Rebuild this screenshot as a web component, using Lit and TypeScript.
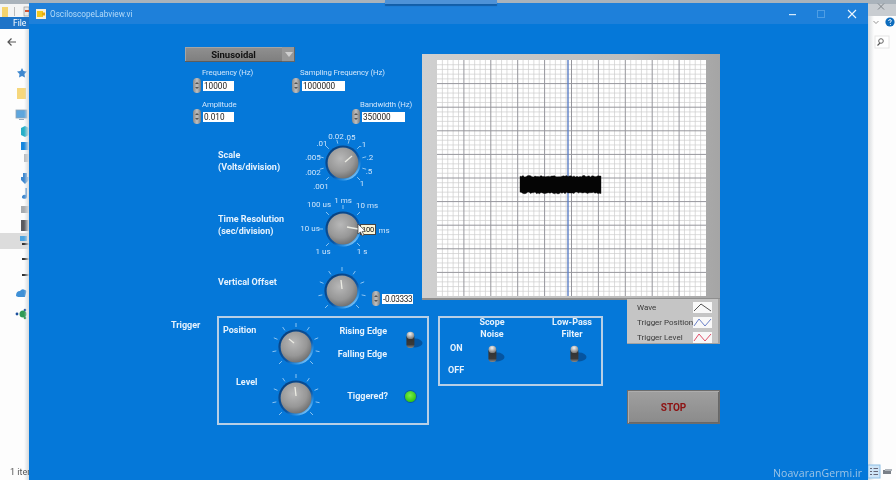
import { LitElement, html, css, svg } from "lit";
import { customElement, property } from "lit/decorators.js";

const pos = (x: number, y: number) => `left:${x - 29}px;top:${y - 24}px`;

@customElement("lv-knob")
class LvKnob extends LitElement {
  @property({ type: Number }) ticks = 9;
  @property({ type: Array }) pointer: number[] = [0, -2, 0, -10];
  static styles = css`
    :host { display: block; width: 60px; height: 60px; }
    svg { display: block; }
  `;
  render() {
    const t = [];
    for (let i = 0; i < this.ticks; i++) {
      const a = ((-135 + (270 * i) / (this.ticks - 1)) * Math.PI) / 180;
      t.push(svg`<line x1=${30 + 20 * Math.sin(a)} y1=${30 - 20 * Math.cos(a)} x2=${30 + 24 * Math.sin(a)} y2=${30 - 24 * Math.cos(a)} stroke="#8cc4f2" stroke-width="1" />`);
    }
    const p = this.pointer;
    return html`<svg width="60" height="60" viewBox="0 0 60 60">
      <defs>
        <radialGradient id="k" cx="0.42" cy="0.36" r="0.72">
          <stop offset="0" stop-color="#b8b8b8" />
          <stop offset="0.6" stop-color="#979797" />
          <stop offset="1" stop-color="#666" />
        </radialGradient>
        <linearGradient id="ring" x1="0.15" y1="0.1" x2="0.85" y2="0.95">
          <stop offset="0" stop-color="#08417f" />
          <stop offset="0.6" stop-color="#0a56a6" />
          <stop offset="0.82" stop-color="#2c93e6" />
          <stop offset="1" stop-color="#a6dafc" />
        </linearGradient>
      </defs>
      ${t}
      <circle cx="30" cy="30" r="17.6" fill="url(#ring)" />
      <circle cx="30" cy="30" r="15.4" fill="url(#k)" />
      <line x1=${30 + p[0]} y1=${30 + p[1]} x2=${30 + p[2]} y2=${30 + p[3]} stroke="#ecece4" stroke-width="1.3" />
    </svg>`;
  }
}

@customElement("lv-num")
class LvNum extends LitElement {
  @property() value = "";
  @property({ type: Number }) w = 30;
  static styles = css`
    :host { display: flex; align-items: center; gap: 2px; font: 8.2px Roboto, sans-serif; }
    .spin { width: 8px; height: 15px; border-radius: 4px; background: linear-gradient(90deg, #8a8a8a, #c0c0c0 50%, #7b7b7b); display: flex; flex-direction: column; align-items: center; justify-content: center; gap: 3px; }
    .spin i { width: 0; height: 0; border-left: 2px solid transparent; border-right: 2px solid transparent; }
    .spin i.u { border-bottom: 2px solid #555; }
    .spin i.d { border-top: 2px solid #555; }
    .box { height: 10px; background: #fff; color: #222; line-height: 10px; padding-left: 1px; overflow: hidden; white-space: nowrap; }
  `;
  render() {
    return html`<div class="spin"><i class="u"></i><i class="d"></i></div>
      <div class="box" style="width:${this.w - 1}px">${this.value}</div>`;
  }
}

@customElement("lv-toggle")
class LvToggle extends LitElement {
  static styles = css`:host { display: block; width: 20px; height: 20px; } svg { display: block; }`;
  render() {
    return html`<svg width="20" height="20" viewBox="0 0 20 20">
      <defs>
        <radialGradient id="tb" cx="0.45" cy="0.3" r="0.7"><stop offset="0" stop-color="#f4f4f4" /><stop offset="1" stop-color="#747474" /></radialGradient>
        <linearGradient id="tg" x1="0" y1="0" x2="0" y2="1"><stop offset="0" stop-color="#2e2e2e" /><stop offset="0.75" stop-color="#3a3a3a" /><stop offset="1" stop-color="#8a8a8a" /></linearGradient>
      </defs>
      <ellipse cx="12" cy="13" rx="7.5" ry="4.4" fill="#06488c" opacity="0.75" />
      <rect x="3.4" y="4" width="8" height="14" rx="3.4" fill="url(#tg)" />
      <ellipse cx="7.4" cy="5.4" rx="3.8" ry="3.6" fill="url(#tb)" />
    </svg>`;
  }
}

function wave() {
  let d = "M520 177";
  let s = 7;
  const r = () => ((s = (s * 73 + 41) % 101), s / 101);
  for (let x = 520; x <= 601; x += 1.5) d += ` L${x} ${177 - r() * 1.6}`;
  for (let x = 601; x >= 520; x -= 1.5) d += ` L${x} ${192 + r() * 1.8}`;
  return d + " Z";
}

@customElement("app-root")
class AppRoot extends LitElement {
  static styles = css`
    :host { display: block; width: 896px; height: 480px; overflow: hidden; font-family: Roboto, "Liberation Sans", Arial, sans-serif; }
    .stage { position: relative; width: 896px; height: 480px; background: #fdfdfd; overflow: hidden; filter: blur(0.45px); }
    .abs { position: absolute; }
    .topstrip { left: 0; top: 0; width: 896px; height: 4px; background: #aab3bb; }
    .chip { left: 385px; top: 0; width: 112px; height: 4px; background: #4d92d8; box-shadow: 0 2px 1px #125ea8; z-index: 3; }
    .qa { left: 0; top: 4px; width: 29px; height: 13px; background: #f4f4f4; }
    .filetab { left: 0; top: 17px; width: 29px; height: 12px; background: #1f74c8; color: #fff; font-size: 8.5px; line-height: 12px; padding-left: 13px; box-sizing: border-box; }
    .selrow { left: 0; top: 233px; width: 29px; height: 16px; background: #dcdcdc; }
    .shadow-l { left: 24px; top: 29px; width: 5px; height: 451px; background: linear-gradient(90deg, transparent, #d6dadd); }
    .items { left: 10px; top: 467px; font-size: 9px; color: #555; white-space: nowrap; }
    .rtop { left: 868px; top: 4px; width: 28px; height: 12px; background: #c9cdd1; }
    .rshadow { left: 868px; top: 16px; width: 6px; height: 464px; background: linear-gradient(90deg, #d6dadd, transparent); }
    .window { left: 29px; top: 3px; width: 839px; height: 477px; background: #0578d9; display: flex; flex-direction: column; }
    .title { height: 21px; flex: none; background: #1e80da; display: flex; align-items: center; padding-left: 7px; gap: 4px; color: #b4daf8; font: 8.2px Roboto, sans-serif; position: relative; }
    .panel { position: relative; flex: 1; }
    .wbtn { position: absolute; top: 0; height: 21px; width: 20px; display: flex; align-items: center; justify-content: center; }
    .it { position: absolute; white-space: nowrap; }
    .lab { font-size: 7.8px; color: #cfe5fb; line-height: 10px; letter-spacing: -0.1px; }
    .bold { font-size: 9px; font-weight: 700; color: #e6f2fd; line-height: 11.5px; }
    .tick { font-size: 8px; color: #cfe5fb; transform: translate(-50%, -50%); line-height: 10px; }
    .c { text-align: center; transform: translateX(-50%); }
    .r { transform: translateX(-100%); }
    .knob { transform: translate(-30px, -30px); }
    .tight { letter-spacing: -0.35px; }
    .drop { width: 110px; height: 15px; background: linear-gradient(#909090, #7e7e7e); box-shadow: inset -1px -1px 0 #5c5c5c, inset 1px 1px 0 #a5a5a5; display: flex; align-items: center; color: #111; font-size: 9.5px; font-weight: 700; }
    .drop span { flex: 1; text-align: center; padding-right: 0; }
    .drop b { width: 13px; height: 15px; background: #989898; display: flex; align-items: center; justify-content: center; box-shadow: inset -1px -1px 0 #666; }
    .drop b i { width: 0; height: 0; border-left: 4px solid transparent; border-right: 4px solid transparent; border-top: 5px solid #cfcfcf; }
    .scope { width: 298px; height: 246px; background: linear-gradient(90deg, #d0d0d0, #bdbdbd 70%, #a5a5a5); box-shadow: inset 0 -2px 0 #8e8e8e; box-sizing: border-box; padding: 6px 14px 4px 15px; }
    .scope svg { display: block; background: #fff; }
    .legend { width: 93px; height: 45px; background: #c5c5c5; box-shadow: inset -2px -1px 0 #a2a2a2; display: grid; grid-template-columns: 1fr 19px; grid-auto-rows: 15px; padding: 1px 8px 0 10px; box-sizing: border-box; font-size: 8px; color: #3a3a3a; align-items: center; white-space: nowrap; }
    .legend svg { display: block; background: #f8f8f8; }
    .frame { border: 2px solid #b7cfe6; box-sizing: border-box; }
    .led { width: 11px; height: 11px; border-radius: 50%; background: radial-gradient(circle at 45% 40%, #7cf04a, #35c512 70%, #1e8a10); box-shadow: 0 0 0 1px #0b5aa5; }
    .stop { width: 93px; height: 34px; background: linear-gradient(#a0a0a0, #8a8a8a); box-shadow: inset 0 0 0 1px #6d6d6d, inset 2px 2px 0 #adadad, inset -2px -2px 0 #686868; display: flex; align-items: center; justify-content: center; color: #8d1212; font-size: 10px; font-weight: 700; }
    .tip { width: 16px; height: 11px; background: #fbf6d8; border: 1px solid #444; box-sizing: border-box; font-size: 7.5px; line-height: 9px; color: #111; text-align: center; letter-spacing: -0.2px; }
    .mark { left: 773px; top: 466px; font: 10.5px "Open Sans", sans-serif; color: #9cc4e6; letter-spacing: 0.1px; }
  `;

  grid() {
    const w = 269, h = 236;
    const lines = [];
    for (let i = 0; i <= 50; i++) {
      const x = (i * w) / 50;
      if (i % 5) lines.push(svg`<line x1=${x} x2=${x} y1="0" y2=${h} stroke="#cdcdcd" stroke-width="0.7" />`);
    }
    for (let i = 0; i <= 50; i++) {
      const y = (i * h) / 50;
      if (i % 5) lines.push(svg`<line x1="0" x2=${w} y1=${y} y2=${y} stroke="#cdcdcd" stroke-width="0.7" />`);
    }
    for (let i = 1; i < 10; i++) {
      const x = (i * w) / 10;
      lines.push(svg`<line x1=${x} x2=${x} y1="0" y2=${h} stroke="#96969c" stroke-width="1" />`);
      const y = (i * h) / 10;
      lines.push(svg`<line x1="0" x2=${w} y1=${y} y2=${y} stroke="#96969c" stroke-width="1" />`);
    }
    return lines;
  }

  swatch(color: string, d: string) {
    return html`<svg width="19" height="11" viewBox="0 0 19 11"><path d=${d} fill="none" stroke=${color} stroke-width="1" /></svg>`;
  }

  render() {
    const scaleLabels: [string, number, number][] = [[".001", 321, 187], [".002", 313, 173], [".005", 313, 158], [".01", 322, 144], ["0.02", 336, 137], [".05", 350, 138], [".1", 363, 145], [".2", 370, 158], [".5", 369, 172], ["1", 362, 184]];
    const timeLabels: [string, number, number][] = [["100 us", 319, 205], ["1 ms", 343, 201], ["10 ms", 367, 206], ["10 us", 310, 229], ["ms", 384, 231], ["1 us", 323, 252], ["1 s", 362, 252]];
    const nums: [string, number, number, number, string, number, number][] = [
      ["10000", 193, 86, 31, "Frequency (Hz)", 202, 68],
      ["1000000", 292, 86, 43, "Sampling Frequency (Hz)", 300, 68],
      ["0.010", 193, 117, 31, "Amplitude", 202, 100],
      ["350000", 352, 117, 43, "Bandwidth (Hz)", 360, 100],
    ];
    return html`<div class="stage">
      <div class="abs topstrip"></div>
      <div class="abs chip"></div>
      <div class="abs qa">
        <svg width="29" height="13" viewBox="0 0 29 13">
          <rect x="2" y="1" width="6" height="10" fill="#f6d46e" />
          <rect x="14" y="1" width="1" height="9" fill="#bbb" />
          <rect x="24" y="1" width="5" height="9" fill="#e8e8e8" stroke="#888" stroke-width="0.6" />
          <rect x="25" y="4" width="4" height="2" fill="#d05030" />
        </svg>
      </div>
      <div class="abs filetab">File</div>
      <div class="abs selrow"></div>
      <svg class="abs" style="left:0;top:29px" width="29" height="300" viewBox="0 29 29 300">
        <path d="M16 42 H8 M11.5 38.5 L8 42 L11.5 45.5" fill="none" stroke="#555" stroke-width="1.2" />
        <path d="M22 68 L23.5 71 L27 71.5 L24.5 74 L25 77.5 L22 76 L19 77.5 L19.5 74 L17 71.5 L20.5 71 Z" fill="#3f88cf" />
        <rect x="17" y="88" width="9" height="11" fill="#f6d77c" />
        <rect x="16" y="110" width="11" height="8" fill="#5ea6dd" stroke="#90a4b4" stroke-width="0.8" />
        <rect x="19" y="119" width="5" height="1" fill="#9ab" />
        <path d="M25 126 L29 128 V135 L25 137 L21 135 V128 Z" fill="#27b0c8" />
        <rect x="21" y="142" width="8" height="8" fill="#1686de" />
        <rect x="24" y="154" width="5" height="8" fill="#b8bcc0" />
        <path d="M23 173 H27 V177 H29 V180 L25 184 L21 180 V177 H23 Z" fill="#3f88cf" />
        <path d="M27 188 V197 A2.5 2 0 1 1 25.5 195 V188 Z" fill="#3f88cf" />
        <rect x="21" y="206" width="8" height="7" fill="#a8acb0" />
        <rect x="21" y="220" width="8" height="11" fill="#5a5a5f" />
        <rect x="20" y="236" width="7" height="5" fill="#4ca3df" />
        <rect x="22" y="243" width="7" height="2" fill="#333" />
        <rect x="22" y="258" width="7" height="2" fill="#333" />
        <rect x="22" y="274" width="7" height="2" fill="#333" />
        <path d="M16 296 Q16 291 20 291 Q22 288 25 290 Q27 290 26 293 L25 297 H18 Z" fill="#3f90d6" />
        <circle cx="23" cy="314" r="3.5" fill="#2f9a55" />
        <circle cx="17" cy="314" r="1.4" fill="#1c4f9c" />
        <circle cx="25" cy="310" r="1.3" fill="#1c4f9c" />
        <circle cx="25" cy="318" r="1.3" fill="#2f9a55" />
      </svg>
      <div class="abs shadow-l"></div>
      <div class="abs items">1 item</div>

      <div class="abs rtop"></div>
      <div class="abs rshadow"></div>
      <svg class="abs" style="left:868px;top:0" width="28" height="52" viewBox="868 0 28 52">
        <path d="M878 3.5 L884 9.5 M884 3.5 L878 9.5" stroke="#7d8388" stroke-width="1" />
        <path d="M873.5 21 L876 23.5 L878.5 21" fill="none" stroke="#888" stroke-width="0.9" />
        <circle cx="890" cy="22" r="4.6" fill="#0d6cbd" />
        <path d="M888.6 21 Q888.8 19.6 890 19.6 Q891.4 19.6 891.3 21 Q891.2 21.8 890 22.4 V23" fill="none" stroke="#fff" stroke-width="0.9" />
        <rect x="890" y="24" width="0.9" height="0.9" fill="#fff" />
        <rect x="875" y="36" width="14" height="12" fill="#fff" stroke="#e6e6e6" />
        <circle cx="881" cy="41" r="2.3" fill="none" stroke="#555" stroke-width="0.9" />
        <path d="M880 43 L877.5 45.5" stroke="#555" stroke-width="1.1" />
      </svg>
      <svg class="abs" style="left:868px;top:464px" width="28" height="16" viewBox="0 0 28 16">
        <rect x="0" y="1" width="12" height="13" fill="#cfe5f7" stroke="#8ebfe6" />
        <path d="M2 4.5 H4 M5.5 4.5 H10 M2 7.5 H4 M5.5 7.5 H10 M2 10.5 H4 M5.5 10.5 H10" stroke="#667" stroke-width="1" />
        <rect x="15" y="6" width="8" height="4" fill="#7a8088" />
        <rect x="17" y="5" width="7" height="2" fill="#b0b6bc" />
      </svg>

      <div class="abs window">
        <div class="title">
          <svg width="10" height="10" viewBox="0 0 10 10"><rect width="10" height="10" fill="#f4f0dc" /><rect x="1" y="2" width="6" height="6" fill="#f2c81e" /><rect x="6" y="3.5" width="3" height="3" fill="#e5a810" /></svg>
          <span>OsciloscopeLabview.vi</span>
          <div class="wbtn" style="left:754px"><svg width="10" height="10"><rect x="1" y="5" width="7" height="1.2" fill="#d4e9fb" /></svg></div>
          <div class="wbtn" style="left:782px"><svg width="10" height="10"><rect x="1.5" y="1.5" width="7" height="7" fill="none" stroke="#4f9ee4" /></svg></div>
          <div class="wbtn" style="left:813px"><svg width="10" height="10"><path d="M1 1 L9 9 M9 1 L1 9" stroke="#eef6fe" stroke-width="1.1" /></svg></div>
        </div>
        <div class="panel">
          <div class="it drop" style=${pos(185, 47)}><span>Sinusoidal</span><b><i></i></b></div>
          ${nums.map(
            ([v, x, y, w, l, lx, ly]) => html`
              <div class="it lab" style=${pos(lx, ly)}>${l}</div>
              <lv-num class="it" style="${pos(x, y - 8)}" .value=${v} .w=${w}></lv-num>
            `
          )}

          <div class="it bold" style=${pos(218, 150)}>Scale<br />(Volts/division)</div>
          <div class="it bold" style=${pos(218, 214)}>Time Resolution<br />(sec/division)</div>
          <div class="it bold" style=${pos(218, 277)}>Vertical Offset</div>
          <div class="it bold" style=${pos(171, 320)}>Trigger</div>

          ${scaleLabels.map(([t, x, y]) => html`<div class="it tick" style=${pos(x, y)}>${t}</div>`)}
          ${timeLabels.map(([t, x, y]) => html`<div class="it tick" style=${pos(x, y)}>${t}</div>`)}

          <lv-knob class="it knob" style=${pos(343, 163)} .ticks=${10} .pointer=${[2, -1, 9, -7]}></lv-knob>
          <lv-knob class="it knob" style=${pos(343, 229)} .ticks=${7} .pointer=${[4, -2, 15, 0]}></lv-knob>
          <lv-knob class="it knob" style=${pos(342, 291)} .ticks=${9} .pointer=${[-1, -11, 0, -2]}></lv-knob>

          <lv-num class="it tight" style=${pos(372, 291)} .value=${"-0.03333"} .w=${31}></lv-num>

          <div class="it tip" style=${pos(360, 224)}>100</div>
          <svg class="it" style=${pos(357, 223)} width="10" height="14" viewBox="0 0 10 14"><path d="M1 1 V11 L3.5 9 L5.5 13 L7 12 L5.2 8.5 L8.5 8.2 Z" fill="#fff" stroke="#333" stroke-width="0.7" /></svg>

          <div class="it scope" style=${pos(422, 54)}>
            <svg width="269" height="236" viewBox="0 0 269 236">
              ${this.grid()}
              <line x1="131" x2="131" y1="0" y2="236" stroke="#5b7ec6" stroke-width="1.4" />
              <path transform="translate(-437,-60)" d=${wave()} fill="#050505" stroke="#050505" stroke-width="0.4" />
            </svg>
          </div>

          <div class="it legend" style=${pos(627, 299)}>
            <span>Wave</span>${this.swatch("#555", "M1 9 L8 2 L18 9")}
            <span>Trigger Position</span>${this.swatch("#6a80c8", "M1 9 L6 2 L12 9 L18 2")}
            <span>Trigger Level</span>${this.swatch("#e0506a", "M1 9 L6 2 L12 9 L18 2")}
          </div>

          <div class="it frame" style="${pos(217, 316)};width:212px;height:109px"></div>
          <div class="it bold" style=${pos(223, 325)}>Position</div>
          <div class="it bold r" style=${pos(387, 326)}>Rising Edge</div>
          <div class="it bold r" style=${pos(387, 349)}>Falling Edge</div>
          <div class="it bold" style=${pos(236, 377)}>Level</div>
          <div class="it bold r" style=${pos(388, 391)}>Tiggered?</div>
          <lv-knob class="it knob" style=${pos(296, 347)} .ticks=${9} .pointer=${[-7, -8, -2, -4]}></lv-knob>
          <lv-knob class="it knob" style=${pos(296, 398)} .ticks=${9} .pointer=${[-1, -11, 0, -2]}></lv-knob>
          <lv-toggle class="it" style=${pos(403, 330)}></lv-toggle>
          <div class="it led" style=${pos(405, 391)}></div>

          <div class="it frame" style="${pos(438, 316)};width:165px;height:70px"></div>
          <div class="it bold c" style=${pos(492, 317)}>Scope<br />Noise</div>
          <div class="it bold c" style=${pos(572, 317)}>Low-Pass<br />Filter</div>
          <div class="it bold" style=${pos(450, 343)}>ON</div>
          <div class="it bold" style=${pos(448, 365)}>OFF</div>
          <lv-toggle class="it" style=${pos(485, 344)}></lv-toggle>
          <lv-toggle class="it" style=${pos(567, 344)}></lv-toggle>

          <div class="it stop" style=${pos(627, 390)}>STOP</div>
        </div>
      </div>
      <div class="abs mark">NoavaranGermi.ir</div>
    </div>`;
  }
}
